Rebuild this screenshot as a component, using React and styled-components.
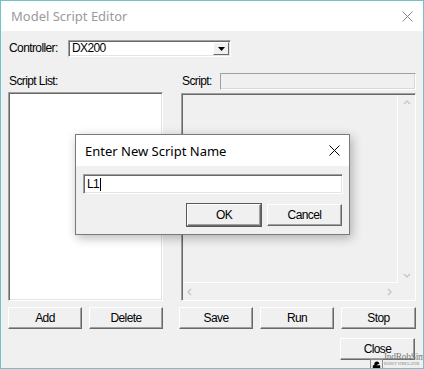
import React from 'react'
import styled, { createGlobalStyle } from 'styled-components'

const Global = createGlobalStyle`
  html, body {
    margin: 0;
    padding: 0;
    background: #f0f0f0;
  }
  * {
    box-sizing: border-box;
  }
`

const classic = `"Liberation Sans", Arial, sans-serif`
const modern = `"Noto Sans", "Open Sans", sans-serif`

const Window = styled.div`
  position: relative;
  width: 424px;
  height: 369px;
  border: 1px solid #6ec4c6;
  background: #f0f0f0;
  display: flex;
  flex-direction: column;
  overflow: hidden;
  font-family: ${classic};
  font-size: 12px;
  letter-spacing: -0.6px;
  color: #000;
`

const TitleBar = styled.div`
  height: 30px;
  flex: none;
  display: flex;
  align-items: center;
  justify-content: space-between;
  background: #fff;
  padding: 0 10px 0 10px;
`

const TitleText = styled.span`
  font-family: ${modern};
  font-size: ${p => p.$size || 13}px;
  color: ${p => p.$color || '#000'};
  letter-spacing: 0;
`

const Body = styled.div`
  flex: 1;
  display: flex;
  flex-direction: column;
  padding: 9px 7px 0 7px;
`

const ControllerRow = styled.div`
  display: flex;
  align-items: center;
  height: 17px;
`

const Label = styled.span`
  width: ${p => p.$w || 'auto'};
  flex: none;
  padding-left: 1px;
  line-height: 17px;
`

const Combo = styled.div`
  width: 163px;
  height: 17px;
  display: flex;
  background: #fff;
  border: 1px solid;
  border-color: #a0a0a0 #fff #fff #a0a0a0;
  box-shadow: inset 1px 1px 0 #696969, inset -1px -1px 0 #e3e3e3;
  padding: 1px 1px 1px 3px;
`

const ComboText = styled.span`
  flex: 1;
  line-height: 13px;
`

const ComboButton = styled.div`
  width: 16px;
  height: 13px;
  background: #f0f0f0;
  border: 1px solid;
  border-color: #fff #696969 #696969 #fff;
  display: flex;
  align-items: center;
  justify-content: center;
`

const Main = styled.div`
  margin-top: 16px;
  display: grid;
  grid-template-columns: 155px 235px;
  grid-template-rows: 19px 209px;
  column-gap: 18px;
`

const Header = styled.div`
  display: flex;
  align-items: center;
  height: 17px;
`

const ScriptField = styled.div`
  flex: 1;
  height: 17px;
  border: 1px solid;
  border-color: #a0a0a0 #fff #fff #a0a0a0;
  box-shadow: inset -1px -1px 0 #d8d8d8;
`

const ListBox = styled.div`
  background: #fff;
  border: 1px solid;
  border-color: #a0a0a0 #fff #fff #a0a0a0;
  box-shadow: inset 1px 1px 0 #696969, inset -1px -1px 0 #e3e3e3;
`

const ScriptArea = styled.div`
  margin-top: 1px;
  display: grid;
  grid-template-columns: 1fr 17px;
  grid-template-rows: 1fr 17px;
  border: 1px solid;
  border-color: #a0a0a0 #fff #fff #a0a0a0;
  box-shadow: inset 1px 1px 0 #696969;
  padding: 1px 0 0 1px;
  background: #f0f0f0;
`

const TextPane = styled.div`
  border-right: 1px solid #fff;
  border-bottom: 1px solid #fff;
`

const ScrollBar = styled.div`
  display: flex;
  flex-direction: ${p => (p.$vertical ? 'column' : 'row')};
  justify-content: space-between;
  align-items: center;
  padding: ${p => (p.$vertical ? '4px 0 3px' : '0 4px 0 3px')};
`

const Corner = styled.div``

const ButtonRow = styled.div`
  margin-top: 6px;
  display: flex;
  gap: 7px;
`

const ButtonGroup = styled.div`
  display: flex;
  gap: 7px;
  margin-left: ${p => p.$offset || 0}px;
`

const Button = styled.div`
  width: ${p => p.$w || 74}px;
  height: 22px;
  display: flex;
  align-items: center;
  justify-content: center;
  background: #f0f0f0;
  border: 1px solid;
  border-color: #fff #696969 #696969 #fff;
  box-shadow: inset -1px -1px 0 #a0a0a0;
  outline: ${p => (p.$default ? '1px solid #5a5a5a' : 'none')};
  padding-bottom: 1px;
`

const CloseRow = styled.div`
  margin-top: 9px;
  display: flex;
  justify-content: flex-end;
  padding-right: 1px;
`

const Dialog = styled.div`
  position: absolute;
  left: 74px;
  top: 133px;
  width: 275px;
  height: 101px;
  border: 1px solid #7a7a7a;
  background: #f0f0f0;
  box-shadow: 2px 3px 10px rgba(0, 0, 0, 0.28);
  display: flex;
  flex-direction: column;
`

const DialogTitle = styled(TitleBar)`
  height: 31px;
  padding: 0 9px 0 9px;
`

const DialogBody = styled.div`
  display: flex;
  flex-direction: column;
  padding: 8px 6px 0 7px;
`

const TextInput = styled.div`
  height: 20px;
  width: 260px;
  background: #fff;
  border: 1px solid;
  border-color: #a0a0a0 #fff #fff #a0a0a0;
  box-shadow: inset 1px 1px 0 #696969, inset -1px -1px 0 #e3e3e3;
  padding: 0 0 0 3px;
  display: flex;
  align-items: center;
`

const Caret = styled.span`
  display: inline-block;
  width: 1px;
  height: 13px;
  background: #000;
  margin-left: 1px;
`

const DialogButtons = styled.div`
  margin-top: 10px;
  display: flex;
  justify-content: flex-end;
  gap: 6px;
  padding-right: 1px;
`

/* watermark stamped over the lower right corner */
const Watermark = styled.div`
  position: absolute;
  left: 369px;
  top: 351px;
  display: flex;
  align-items: flex-start;
  gap: 1px;
  letter-spacing: 0;
  pointer-events: none;
`

const MarkIcon = styled.div`
  margin-top: 7px;
  width: 13px;
  height: 13px;
  border: 1px solid #8a8a8a;
  background: rgba(240, 240, 240, 0.6);
  display: flex;
  align-items: flex-start;
  justify-content: center;
  padding-top: 1px;
`

const MarkText = styled.div`
  font-family: "Liberation Serif", serif;
  font-size: 9.5px;
  letter-spacing: -0.3px;
  line-height: 10px;
  color: #7a7a7a;
  display: flex;
  flex-direction: column;
  white-space: nowrap;
`

const MarkSub = styled.span`
  font-size: 3.5px;
  line-height: 5px;
  letter-spacing: 0.2px;
`

const CloseIcon = ({ color, size = 11 }) => (
  <svg width={size} height={size} viewBox="0 0 11 11">
    <path d="M0.5 0.5 L10.5 10.5 M10.5 0.5 L0.5 10.5" stroke={color} strokeWidth="1" fill="none" />
  </svg>
)

const Chevron = ({ dir }) => {
  const d = {
    up: 'M1 5 L4 2 L7 5',
    down: 'M1 2 L4 5 L7 2',
    left: 'M5 1 L2 4 L5 7',
    right: 'M2 1 L5 4 L2 7',
  }[dir]
  return (
    <svg width="8" height="8" viewBox="0 0 8 8">
      <path d={d} stroke="#c6c6c6" strokeWidth="1.4" fill="none" />
    </svg>
  )
}

export default function App() {
  return (
    <>
      <Global />
      <Window>
        <TitleBar>
          <TitleText $color="#9a9a9a">Model Script Editor</TitleText>
          <CloseIcon color="#8a8a8a" />
        </TitleBar>
        <Body>
          <ControllerRow>
            <Label $w="60px">Controller:</Label>
            <Combo>
              <ComboText>DX200</ComboText>
              <ComboButton>
                <svg width="7" height="4" viewBox="0 0 7 4">
                  <path d="M0 0 H7 L3.5 4 Z" fill="#000" />
                </svg>
              </ComboButton>
            </Combo>
          </ControllerRow>

          <Main>
            <Header>
              <Label>Script List:</Label>
            </Header>
            <Header>
              <Label $w="39px">Script:</Label>
              <ScriptField />
            </Header>
            <ListBox />
            <ScriptArea>
              <TextPane />
              <ScrollBar $vertical>
                <Chevron dir="up" />
                <Chevron dir="down" />
              </ScrollBar>
              <ScrollBar>
                <Chevron dir="left" />
                <Chevron dir="right" />
              </ScrollBar>
              <Corner />
            </ScriptArea>
          </Main>

          <ButtonRow>
            <ButtonGroup>
              <Button>Add</Button>
              <Button>Delete</Button>
            </ButtonGroup>
            <ButtonGroup $offset={9}>
              <Button>Save</Button>
              <Button>Run</Button>
              <Button $w={75}>Stop</Button>
            </ButtonGroup>
          </ButtonRow>

          <CloseRow>
            <Button $w={75}>Close</Button>
          </CloseRow>
        </Body>

        <Dialog>
          <DialogTitle>
            <TitleText $color="#000">Enter New Script Name</TitleText>
            <CloseIcon color="#000" />
          </DialogTitle>
          <DialogBody>
            <TextInput>
              L1<Caret />
            </TextInput>
            <DialogButtons>
              <Button $default>OK</Button>
              <Button $w={75}>Cancel</Button>
            </DialogButtons>
          </DialogBody>
        </Dialog>

        <Watermark>
          <MarkIcon>
            <svg width="9" height="9" viewBox="0 0 9 9">
              <path d="M1.5 9 V5 H7.5 V9 Z M3 5 V3 A1.8 1.8 0 0 1 6.6 3" stroke="#000" strokeWidth="1.4" fill="#000" />
            </svg>
          </MarkIcon>
          <MarkText>
            <span>IndRobSim</span>
            <MarkSub>ROBOT SIMULATOR</MarkSub>
          </MarkText>
        </Watermark>
      </Window>
    </>
  )
}
